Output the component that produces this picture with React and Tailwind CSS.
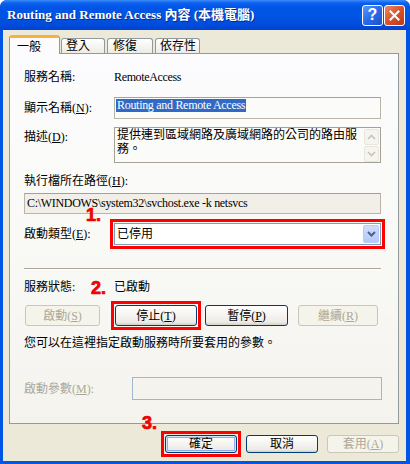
function Btn({ children, className = "", disabled = false, def = false }) {
  const base = disabled
    ? "border-[#c9c7ba] bg-[#f5f4ea] text-[#aca899]"
    : "border-[#003c74] bg-[linear-gradient(to_bottom,#ffffff_0%,#f7f6f2_40%,#ecebe6_85%,#d6d0c5_100%)] text-black";
  const ring = def ? "shadow-[inset_0_0_0_1px_#cee7ff,inset_0_0_0_2px_#89adf0]" : "";
  return (
    <div className={`flex items-center justify-center border rounded-[3px] ${base} ${ring} ${className}`}>
      {children}
    </div>
  );
}

function U({ children }) {
  return <span className="underline underline-offset-[1px]">{children}</span>;
}

function Chevron({ up = false, color = "#c6c4b9", sw = 1.6 }) {
  return (
    <svg width="9" height="6" viewBox="0 0 9 6">
      <polyline
        points={up ? "1,5 4.5,1.5 8,5" : "1,1 4.5,4.5 8,1"}
        fill="none"
        stroke={color}
        strokeWidth={sw}
      />
    </svg>
  );
}

export default function App() {
  return (
    <div className="relative w-[410px] h-[464px] bg-white font-['Liberation_Serif','Noto_Sans_CJK_TC',serif] text-[12px] leading-[14px] text-black">
      <div className="flex flex-col w-full h-full rounded-t-[7px] bg-[#0055e5] overflow-hidden">
        {/* title bar */}
        <div className="h-[30px] shrink-0 flex items-center pl-[7px] pr-[5px] bg-[linear-gradient(to_bottom,#3d8ef8_0%,#0b60ef_10%,#0055e5_25%,#0053e2_60%,#004bda_85%,#0042cf_100%)]">
          <div className="flex-1 text-white font-bold text-[13px] leading-[16px] [text-shadow:1px_1px_0_#0a2a8a]">
            Routing and Remote Access 內容 (本機電腦)
          </div>
          <div className="w-[21px] h-[21px] rounded-[3px] border border-white bg-[linear-gradient(135deg,#5a9af8_0%,#2a6ae8_50%,#1b4fd0_100%)] flex items-center justify-center text-white font-bold text-[16px] font-['Liberation_Sans',sans-serif] leading-none">
            ?
          </div>
          <div className="ml-[1px] w-[21px] h-[21px] rounded-[3px] border border-white bg-[linear-gradient(135deg,#ec8a63_0%,#d9522c_50%,#b83a12_100%)] flex items-center justify-center">
            <svg width="11" height="11" viewBox="0 0 11 11">
              <path d="M1.5 1.5 L9.5 9.5 M9.5 1.5 L1.5 9.5" stroke="white" strokeWidth="2" strokeLinecap="square" />
            </svg>
          </div>
        </div>

        {/* body */}
        <div className="flex-1 flex flex-col ml-[3px] mr-[4px] mb-[3px] bg-[#ece9d8] pt-[5px] pl-[6px] pr-[7px] pb-[8px]">
          {/* tabs */}
          <div className="relative z-10 flex items-end h-[19px] -mb-[1px]">
            <div className="w-[51px] h-[19px] bg-[#fcfcfe] border-x border-[#919b9c] border-t-[3px] border-t-[#f6b23a] rounded-t-[3px] pl-[7px] pt-[2px] leading-[14px]">
              一般
            </div>
            <div className="ml-[1px] mb-[1px] w-[44px] h-[15px] bg-[linear-gradient(to_bottom,#ffffff,#ecebe6)] border border-b-0 border-[#919b9c] rounded-t-[3px] pl-[4px] leading-[14px]">
              登入
            </div>
            <div className="ml-[2px] mb-[1px] w-[46px] h-[15px] bg-[linear-gradient(to_bottom,#ffffff,#ecebe6)] border border-b-0 border-[#919b9c] rounded-t-[3px] pl-[5px] leading-[14px]">
              修復
            </div>
            <div className="ml-[2px] mb-[1px] w-[45px] h-[15px] bg-[linear-gradient(to_bottom,#ffffff,#ecebe6)] border border-b-0 border-[#919b9c] rounded-t-[3px] pl-[4px] leading-[14px]">
              依存性
            </div>
          </div>

          {/* panel */}
          <div className="flex-1 flex flex-col border border-[#919b9c] bg-[linear-gradient(to_bottom,#fcfcfe_0%,#f9f9f6_50%,#f4f3ee_100%)] pl-[14px] pr-[17px]">
            {/* service name */}
            <div className="flex mt-[16px] h-[14px]">
              <div className="w-[90px]">服務名稱:</div>
              <div className="tracking-[-0.35px]">RemoteAccess</div>
            </div>
            {/* display name */}
            <div className="flex items-center mt-[13px] h-[22px]">
              <div className="w-[90px]">
                顯示名稱(<U>N</U>):
              </div>
              <div className="flex-1 h-[22px] border border-[#b9b6a8] border-t-[#a5a293] bg-[#fbfbf9] pl-[1px]">
                <span className="bg-[#316ac5] text-white px-[1px] leading-[13px] inline-block tracking-[-0.3px]">Routing and Remote Access</span>
              </div>
            </div>
            {/* description */}
            <div className="flex mt-[8px] h-[36px]">
              <div className="w-[90px] pt-[3px]">
                描述(<U>D</U>):
              </div>
              <div className="flex-1 flex border border-[#a5a293] bg-[#fbfbf9]">
                <div className="flex-1 pl-[2px] leading-[14px]">
                  提供連到區域網路及廣域網路的公司的路由服務。
                </div>
                <div className="w-[16px] flex flex-col pt-[1px] pr-[1px] gap-[1px]">
                  <div className="h-[16px] rounded-[2px] border border-[#e8e6dc] bg-[#f5f4ee] flex items-center justify-center">
                    <Chevron up />
                  </div>
                  <div className="h-[16px] rounded-[2px] border border-[#e8e6dc] bg-[#f5f4ee] flex items-center justify-center">
                    <Chevron />
                  </div>
                </div>
              </div>
            </div>
            {/* path label */}
            <div className="mt-[11px] h-[14px]">
              執行檔所在路徑(<U>H</U>):
            </div>
            {/* path box */}
            <div className="mt-[5px] h-[21px] border border-[#b9b6a8] border-t-[#a5a293] bg-[#f1efe7] pl-[2px] pt-[2px] whitespace-nowrap tracking-[-0.3px]">
              C:\WINDOWS\system32\svchost.exe -k netsvcs
            </div>
            {/* startup type */}
            <div className="flex items-center mt-[9px] h-[22px]">
              <div className="w-[90px]">
                啟動類型(<U>E</U>):
              </div>
              <div className="flex-1 h-[22px] flex items-center border border-[#7f9db9] bg-white outline-3 outline-solid outline-[#ff0000] outline-offset-1 pl-[2px] pr-[1px]">
                <div className="flex-1">已停用</div>
                <div className="w-[16px] h-[18px] rounded-[2px] border border-[#b6cbf9] bg-[linear-gradient(to_bottom,#cfdcfd,#b4c9f8)] flex items-center justify-center">
                  <Chevron color="#4d6185" sw={2} />
                </div>
              </div>
            </div>
            {/* separator */}
            <div className="mt-[23px] h-[2px] border-t border-[#aca899] border-b border-b-white" />
            {/* status */}
            <div className="flex mt-[10px] h-[14px]">
              <div className="w-[90px]">服務狀態:</div>
              <div>已啟動</div>
            </div>
            {/* buttons */}
            <div className="flex mt-[11px] h-[21px] pl-[1px]">
              <Btn disabled className="w-[75px] h-[21px]">
                啟動(<U>S</U>)
              </Btn>
              <div className="ml-[15px] w-[82px] h-[21px] outline-3 outline-solid outline-[#ff0000] outline-offset-1">
                <Btn className="w-full h-full">
                  停止(<U>T</U>)
                </Btn>
              </div>
              <Btn className="ml-[8px] w-[83px] h-[21px]">
                暫停(<U>P</U>)
              </Btn>
              <Btn disabled className="ml-[10px] w-[80px] h-[21px]">
                繼續(<U>R</U>)
              </Btn>
            </div>
            {/* info */}
            <div className="mt-[10px] h-[14px]">您可以在這裡指定啟動服務時所要套用的參數。</div>
            {/* params */}
            <div className="flex items-center mt-[27px] h-[23px]">
              <div className="w-[108px] text-[#aca899]">
                啟動參數(<U>M</U>):
              </div>
              <div className="flex-1 -mr-[1px] h-[23px] border border-[#a2b7cf] bg-[#f4f3ee]" />
            </div>
          </div>

          {/* bottom buttons */}
          <div className="flex justify-end mt-[11px] h-[18px]">
            <div className="w-[72px] h-[18px] outline-3 outline-solid outline-[#ff0000] outline-offset-1">
              <Btn def className="w-full h-full">
                確定
              </Btn>
            </div>
            <Btn className="ml-[9px] w-[72px] h-[18px]">取消</Btn>
            <Btn disabled className="ml-[9px] w-[72px] h-[18px]">
              套用(<U>A</U>)
            </Btn>
          </div>
        </div>
      </div>

      {/* annotations */}
      <div className="absolute left-[86px] top-[209px] text-[#ff0000] font-['Liberation_Sans',sans-serif] font-bold text-[18px] leading-[12px] [-webkit-text-stroke:0.7px_#e00000]">1.</div>
      <div className="absolute left-[91px] top-[282px] text-[#ff0000] font-['Liberation_Sans',sans-serif] font-bold text-[18px] leading-[12px] [-webkit-text-stroke:0.7px_#e00000]">2.</div>
      <div className="absolute left-[142px] top-[417px] text-[#ff0000] font-['Liberation_Sans',sans-serif] font-bold text-[18px] leading-[12px] [-webkit-text-stroke:0.7px_#e00000]">3.</div>
    </div>
  );
}
